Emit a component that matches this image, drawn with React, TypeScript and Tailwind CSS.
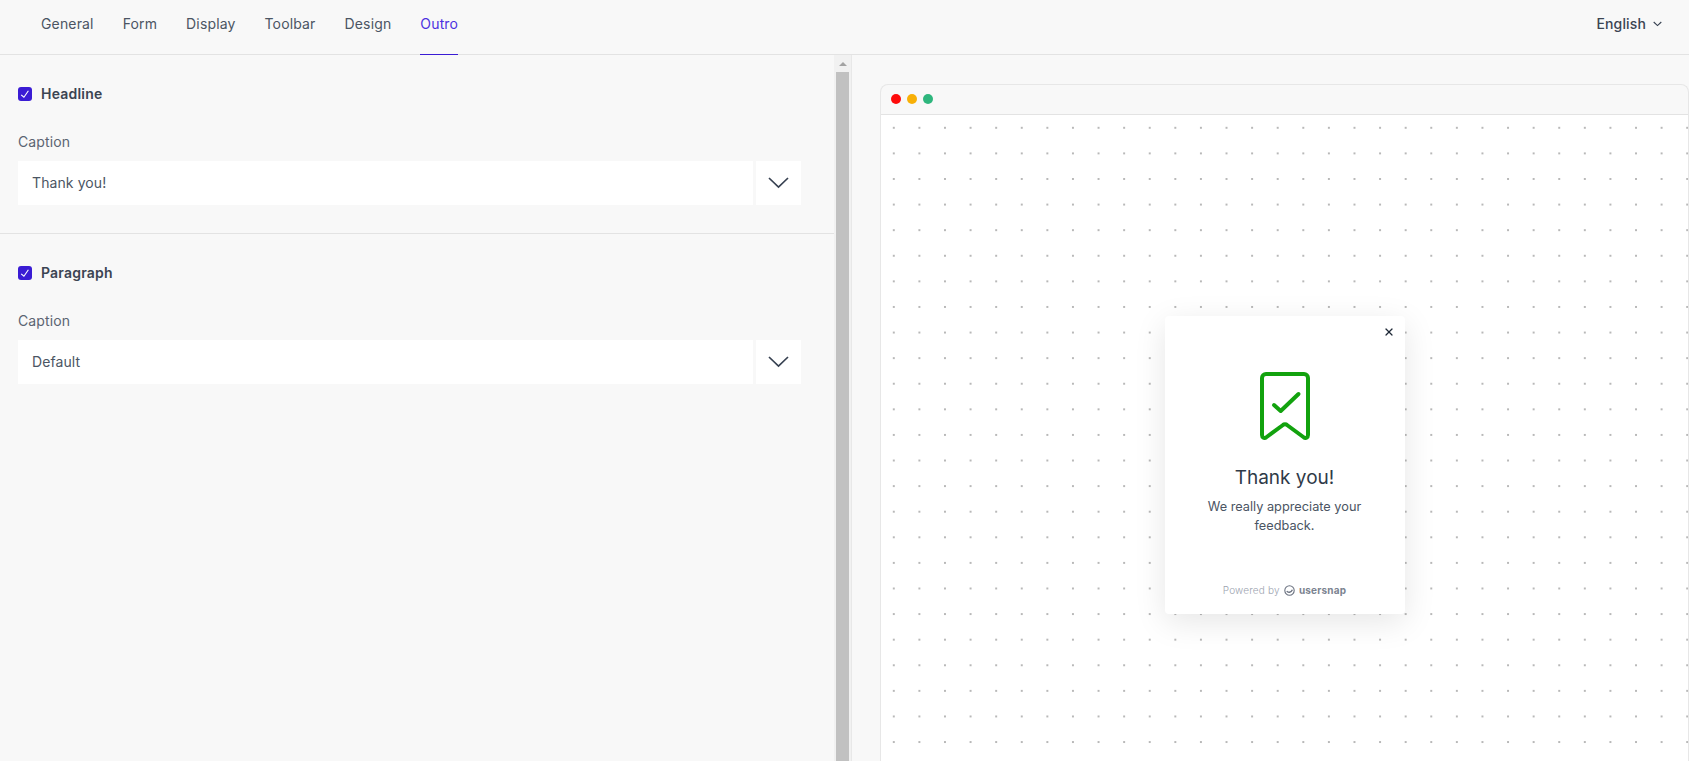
import React from 'react';
import { X } from 'lucide-react';

const tabs = ['General', 'Form', 'Display', 'Toolbar', 'Design', 'Outro'];

const CheckBox = () => (
  <span className="w-[14px] h-[14px] rounded-[3px] bg-[#3a1cd4] flex items-center justify-center shrink-0">
    <svg width="14" height="14" viewBox="0 0 14 14" fill="none">
      <path d="M3.200 7.800 L5.900 10.200 L10.400 3.800" stroke="#fff" strokeWidth="1.100" />
    </svg>
  </span>
);

const FieldGroup = ({ title, value }: { title: string; value: string }) => (
  <div className="pl-[18px] pr-[33px]">
    <label className="flex items-center gap-[9px] h-[20px] text-[14px] font-semibold tracking-[0.2px] text-[#3b4452]">
      <CheckBox /> <span className="pb-[1px]">{title}</span>
    </label>
    <div className="mt-[28px] h-[20px] leading-[20px] text-[14px] tracking-[0.1px] text-[#5b6472]">Caption</div>
    <div className="mt-[9px] flex h-[44px] gap-[3px]">
      <div className="flex-1 bg-white flex items-center pl-[14px] pb-[1px] text-[14px] tracking-[0.1px] text-[#4b5563]">{value}</div>
      <button className="w-[45px] bg-white flex items-center justify-center">
        <svg width="21" height="12" viewBox="0 0 21 12" fill="none">
          <path d="M1 1 L10.500 10 L20 1" stroke="#374151" strokeWidth="1.700" />
        </svg>
      </button>
    </div>
  </div>
);

const BookmarkCheck = () => (
  <svg width="50" height="68" viewBox="0 0 50 68" fill="none" stroke="#12a20e" strokeWidth="4" strokeLinecap="round" strokeLinejoin="round">
    <path d="M6 2 H44 A4 4 0 0 1 48 6 V63 C48 66 45.500 66.500 44 65.500 L27 53 C26 52 24 52 23 53 L6 65.500 C4.500 66.500 2 66 2 63 V6 A4 4 0 0 1 6 2 Z" />
    <path d="M14 33 L20.700 39 L38.500 22" />
  </svg>
);

const UsersnapMark = () => (
  <svg width="11" height="11" viewBox="0 0 11 11" fill="none" stroke="#6b7280" strokeWidth="1.100">
    <circle cx="5.500" cy="5.500" r="4.700" />
    <path d="M2.800 6 C4 8 7 7.800 8.400 4.800" strokeWidth="1.400" />
  </svg>
);

export default function App() {
  return (
    <div className="h-screen flex flex-col overflow-hidden bg-[#f8f8f8] font-['Inter',sans-serif] text-[#374151]">
      <header className="h-[55px] shrink-0 flex justify-between border-b border-[#e3e3e3] pl-[41px] pr-[27px]">
        <nav className="flex gap-[29px]">
          {tabs.map((t) => (
            <a
              key={t}
              className={`flex items-center h-[55px] pb-[7px] text-[14px] tracking-[0.15px] border-b ${
                t === 'Outro' ? 'text-[#4c32e0] border-[#3a1cd4]' : 'text-[#4b5563] border-transparent'
              }`}
            >
              {t}
            </a>
          ))}
        </nav>
        <button className="flex items-center gap-[7px] h-[47px] text-[14px] font-medium tracking-[0.15px] text-[#3b4452]">
          English
          <svg width="9" height="6" viewBox="0 0 9 6" fill="none">
            <path d="M0.700 1 L4.500 4.600 L8.300 1" stroke="#374151" strokeWidth="1.100" />
          </svg>
        </button>
      </header>

      <div className="flex-1 min-h-0 flex">
        <aside className="w-[852px] shrink-0 flex border-r border-[#e8e8e8]">
          <div className="flex-1">
            <div className="pt-[29px] pb-[28px] border-b border-[#e3e3e3]">
              <FieldGroup title="Headline" value="Thank you!" />
            </div>
            <div className="pt-[29px]">
              <FieldGroup title="Paragraph" value="Default" />
            </div>
          </div>
          <div className="w-[17px] shrink-0 bg-[#f1f1f1] flex flex-col items-center">
            <div className="h-[17px] flex items-center justify-center shrink-0">
              <span className="w-0 h-0 border-x-[4px] border-x-transparent border-b-[4px] border-b-[#a3a3a3]" />
            </div>
            <div className="flex-1 w-[13px] bg-[#c1c1c1]" />
          </div>
        </aside>

        <main className="flex-1 min-w-0 pl-[28px] pt-[29px]">
          <div className="h-full flex flex-col rounded-t-[8px] border-l border-t border-r border-[#e7e7e7]">
            <div className="h-[30px] shrink-0 flex items-center gap-[6px] pl-[10px] pb-[1px] border-b border-[#e3e3e3]">
              <span className="w-[10px] h-[10px] rounded-full bg-[#fe0b0b]" />
              <span className="w-[10px] h-[10px] rounded-full bg-[#f8b007]" />
              <span className="w-[10px] h-[10px] rounded-full bg-[#2eb67d]" />
            </div>
            <div className="flex-1 min-h-0 flex justify-center items-start pt-[201px] bg-white bg-[radial-gradient(circle,#b8b8b8_1.2px,transparent_1.4px)] bg-[length:25.6px_25.6px]">
              <div className="relative w-[240px] h-[298px] bg-white rounded-[4px] shadow-[0_8px_32px_rgba(0,0,0,0.1)] flex flex-col items-center pt-[56px]">
                <X size={12} strokeWidth={2.400} className="absolute top-[10px] right-[10px] text-[#1f2937]" />
                <BookmarkCheck />
                <h2 className="mt-[24px] text-[19px] leading-[28px] text-[#2f3a48]">Thank you!</h2>
                <p className="mt-[5px] w-[190px] text-center text-[12.750px] leading-[19px] text-[#4b5563]">
                  We really appreciate your feedback.
                </p>
                <div className="mt-auto mb-[16px] flex items-center gap-[4px] text-[10px] text-[#9ca3af]">
                  <span className="font-light tracking-[0.2px]">Powered by</span>
                  <UsersnapMark />
                  <span className="font-bold tracking-[0.2px] text-[#7b8390]">usersnap</span>
                </div>
              </div>
            </div>
          </div>
        </main>
      </div>
    </div>
  );
}
